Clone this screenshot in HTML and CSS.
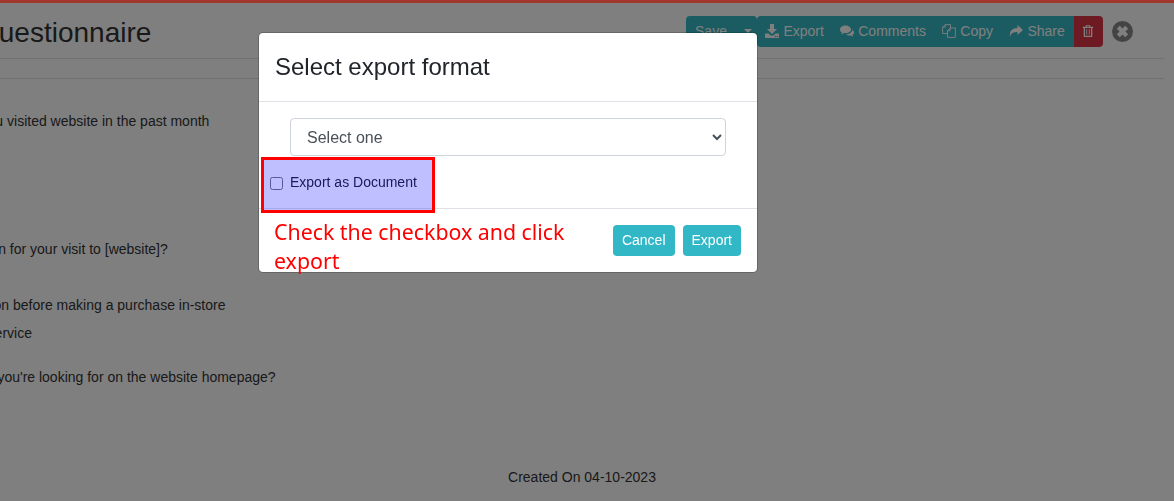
FILE: index.html
```html
<!DOCTYPE html>
<html lang="en">

<head>
    <meta charset="UTF-8">
    <title>Questionnaire</title>
    <link rel="stylesheet" href="styles.css">
</head>

<body>
    <div class="topline"></div>
    <main class="page">
        <header class="page-head">
            <h1>Questionnaire</h1>
            <div class="actions">
                <div class="save-group">
                    <button class="btn save-btn">Save</button>
                    <button class="btn caret-btn" aria-label="more"><span class="caret"></span></button>
                </div>
                <div class="export-group">
                    <button class="btn">
                        <svg class="icon" viewBox="0 0 14 14"><path d="M5 0h4v5h3L7 10 2 5h3zM0 9.500h3.500L5.500 11.500h3L10.500 9.500H14V14H0zM10.500 11.800a.7.7 0 1 0 0 1.400.7.7 0 0 0 0-1.400zM12.500 11.800a.7.7 0 1 0 0 1.400.7.7 0 0 0 0-1.400z" fill-rule="evenodd"/></svg>
                        Export
                    </button>
                    <button class="btn">
                        <svg class="icon" viewBox="0 0 14 14"><path d="M5.500 1.500C2.500 1.500 0 3.200 0 5.400c0 1.200.8 2.300 2 3-.2.700-.6 1.300-1 1.800 1 0 2-.6 2.800-1.300.5.100 1.100.2 1.700.2 3 0 5.500-1.700 5.500-3.700s-2.500-3.900-5.500-3.900z"/><path d="M12 4.600c.2.300.3.700.3 1.100 0 2.600-2.800 4.500-6 4.500h-.5c.9.900 2.200 1.400 3.700 1.400.5 0 1-.1 1.400-.2.700.6 1.500 1.100 2.400 1.200-.4-.5-.7-1-.9-1.600 1-.6 1.600-1.500 1.600-2.500 0-1-.7-1.900-2-2.400z"/></svg>
                        Comments
                    </button>
                    <button class="btn">
                        <svg class="icon" viewBox="0 0 14 14"><path class="line" d="M5.500 9.500H.6V3.200L3.200.6H8.500V4M3.200.6V3.200H.6M8.200 4H13.400V13.400H5.500V6.700ZM8.200 4V6.700H5.500"/></svg>
                        Copy
                    </button>
                    <button class="btn">
                        <svg class="icon" viewBox="0 0 14 14"><path d="M8.500 1L14 6 8.500 11V8C5 8 2 8.500 1 13 .2 8 2.500 4 8.500 4z"/></svg>
                        Share
                    </button>
                </div>
                <button class="btn btn-danger" aria-label="delete">
                    <svg class="icon" viewBox="0 0 14 14"><path d="M5 0h4l1 2h3v1.500h-1V14H2V3.500H1V2h3zM5.500 2h3L8.300 1H5.700zM3.500 3.500v9h7v-9zM5 5h1v6.500H5zM8 5h1v6.500H8z" fill-rule="evenodd"/></svg>
                </button>
                <svg class="close-icon" viewBox="0 0 20 20"><circle cx="10" cy="10" r="10" fill="#888"/><path d="M6 6l8 8m0-8l-8 8" stroke="#fff" stroke-width="4" fill="none"/></svg>
            </div>
        </header>
        <div class="rule"></div>

        <section class="answers">
            <p class="q-first">Have you visited website in the past month</p>
            <p class="q-second">What is the main reason for your visit to [website]?</p>
            <p class="q-opt">Research product information before making a purchase in-store</p>
            <p class="q-opt2">Contact customer service</p>
            <p class="q-third">Were you able to find what you're looking for on the website homepage?</p>
        </section>

        <footer class="created">Created On 04-10-2023</footer>
    </main>

    <div class="backdrop"></div>

    <div class="modal">
        <div class="modal-header">
            <h2>Select export format</h2>
        </div>
        <div class="modal-body">
            <select class="form-select">
                <option>Select one</option>
            </select>
            <label class="check-row">
                <input type="checkbox">
                <span>Export as Document</span>
            </label>
        </div>
        <div class="modal-footer">
            <p class="hint">Check the checkbox and click export</p>
            <div class="modal-buttons">
                <button class="btn btn-teal">Cancel</button>
                <button class="btn btn-teal">Export</button>
            </div>
        </div>
        <div class="highlight"></div>
    </div>
</body>

</html>
```

FILE: styles.css
```css
*,
*::before,
*::after {
    box-sizing: border-box;
    margin: 0;
    padding: 0;
}

html,
body {
    height: 100%;
    overflow: hidden;
}

body {
    font-family: "Liberation Sans", Arial, sans-serif;
    font-size: 14px;
    color: #333;
    background: #fff;
}

.topline {
    position: relative;
    z-index: 1;
    height: 3px;
    background: #a0362e;
}

.page {
    width: 1164px;
}

.page-head {
    display: flex;
    justify-content: space-between;
    align-items: flex-start;
    height: 56px;
    padding-top: 13px;
    border-bottom: 1px solid #dee2e6;
}

.page-head h1 {
    font-size: 28px;
    font-weight: 400;
    line-height: 34px;
    margin-left: -23px;
}

.actions {
    display: flex;
    align-items: flex-start;
    margin-right: 31px;
}

.btn {
    font-family: inherit;
    font-size: 14px;
    line-height: 21px;
    border: 0;
    background: none;
    color: #fff;
    height: 31px;
    padding: 5px 8px;
    white-space: nowrap;
}

.save-group {
    display: flex;
    width: 71px;
    background: #35b8c4;
    border-radius: 4px;
}

.save-btn {
    width: 50px;
}

.caret-btn {
    width: 21px;
}

.caret {
    display: inline-block;
    border-top: 4px solid #fff;
    border-left: 4px solid transparent;
    border-right: 4px solid transparent;
    vertical-align: 3px;
}

.export-group {
    display: flex;
    width: 317px;
    background: #35b8c4;
    border-radius: 4px 0 0 4px;
}

.btn-danger {
    background: #dc3545;
    width: 29px;
    border-radius: 0 4px 4px 0;
    padding: 0 2px 0 0;
}

.btn-danger .icon {
    width: 12px;
    height: 12px;
    margin: 0;
    vertical-align: -1px;
}

.icon {
    width: 14px;
    height: 14px;
    fill: currentColor;
    vertical-align: -2px;
    margin-right: .5px;
}

.icon .line {
    fill: none;
    stroke: currentColor;
    stroke-width: .9;
}

.close-icon {
    width: 21px;
    height: 21px;
    margin: 5px 0 0 9px;
}

.rule {
    height: 20px;
    border-bottom: 1px solid #dee2e6;
}

.answers {
    padding-top: 34px;
}

.answers p {
    line-height: 16px;
    white-space: nowrap;
}

.q-first {
    margin-left: -56px;
}

.q-second {
    margin: 112px 0 0 -145px;
}

.q-opt {
    margin: 40px 0 0 -174.500px;
}

.q-opt2 {
    margin: 12px 0 0 -126px;
}

.q-third {
    margin: 28px 0 0 -172px;
}

.created {
    margin-top: 84px;
    text-align: center;
    line-height: 16px;
}

.backdrop {
    position: fixed;
    inset: 0;
    background: rgba(0, 0, 0, 0.5);
}

.modal {
    position: fixed;
    left: 258px;
    top: 32px;
    width: 500px;
    height: 241px;
    background: #fff;
    background-clip: padding-box;
    border: 1px solid rgba(0, 0, 0, 0.2);
    border-radius: 5px;
    color: #212529;
}

.modal-header {
    height: 69px;
    padding: 19px 16px 0;
    border-bottom: 1px solid #dee2e6;
}

.modal-header h2 {
    font-size: 24px;
    font-weight: 400;
    line-height: 29px;
}

.modal-body {
    height: 107px;
    padding: 16px 31px 0;
    border-bottom: 1px solid #dee2e6;
}

.form-select {
    display: block;
    width: 436px;
    height: 38px;
    padding: 0 12px;
    font-family: inherit;
    font-size: 16px;
    color: #495057;
    background: #fff;
    border: 1px solid #ced4da;
    border-radius: 4px;
}

.check-row {
    display: flex;
    align-items: center;
    gap: 7px;
    margin: 18px 0 0 -20px;
    line-height: 16px;
}

.check-row input {
    width: 13px;
    height: 13px;
    margin-top: 2px;
}

.modal-footer {
    display: flex;
    justify-content: space-between;
    padding: 8px 16px 0 15px;
}

.hint {
    width: 320px;
    font-family: "Noto Sans", sans-serif;
    font-size: 21.33px;
    line-height: 29px;
    color: #f00;
}

.modal-buttons {
    display: flex;
    gap: 8px;
    padding-top: 8px;
}

.btn-teal {
    background: #31b7c5;
    border-radius: 4px;
    padding: 5px 9px;
}

/* annotation drawn on top of the checkbox row */
.highlight {
    position: absolute;
    left: 2px;
    top: 124px;
    width: 174px;
    height: 56px;
    border: 3px solid #f00;
    background: rgba(0, 0, 255, 0.25);
}
```
